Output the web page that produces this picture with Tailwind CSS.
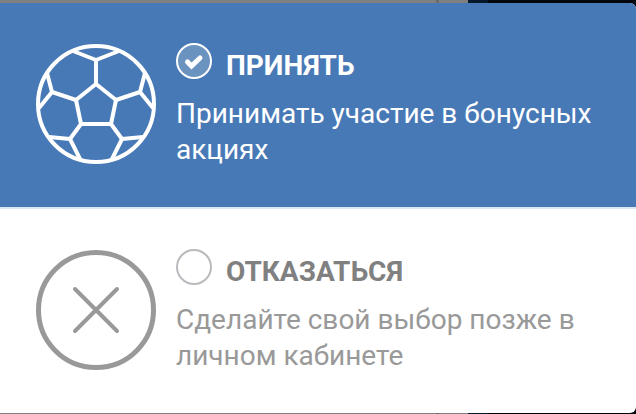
<!DOCTYPE html>
<html lang="ru">
<head>
    <meta charset="UTF-8">
    <meta name="viewport" content="width=device-width, initial-scale=1.0">
    <title>Бонусные акции</title>
    <script src="https://cdn.jsdelivr.net/npm/@tailwindcss/browser@4"></script>
</head>
<body class="min-h-screen bg-[linear-gradient(to_right,#808080_68.6%,#6b6b6b_68.6%,#6b6b6b_69%,#808080_69%,#808080_73.6%,#04182a_73.6%,#04182a_76.7%,#02060f_76.7%)] pt-[3px] pb-px font-[Roboto,sans-serif] text-[28px] leading-9">

<form class="overflow-hidden rounded-r-md bg-white">
    <!-- Accept -->
    <label for="accept" class="flex gap-5 bg-[#4879b7] pt-10 pb-[39px] pl-9 pr-6 text-white">
        <svg class="mt-px size-[120px] shrink-0" viewBox="0 0 120 120" fill="none" stroke="currentColor" stroke-width="4" stroke-linejoin="round" aria-hidden="true">
            <circle cx="60" cy="60" r="58"/>
            <path d="M60 40 80 56 75 80H45L40 56Z"/>
            <path d="M60 40V16M37 7 60 16 83 7"/>
            <path d="M80 56 104 48M109 29 104 48 117 64"/>
            <path d="M40 56 16 48M11 29 16 48 3 64"/>
            <path d="M75 80 86 95M107 93 86 95 76 115"/>
            <path d="M45 80 34 95M13 93 34 95 44 115"/>
        </svg>
        <div>
            <div class="flex gap-3.5">
                <span class="relative size-9 shrink-0">
                    <input type="radio" id="accept" name="bonus" checked class="peer block size-9 appearance-none rounded-full border-2 border-white checked:bg-[#6b93bf]">
                    <svg class="pointer-events-none absolute inset-0 hidden size-9 peer-checked:block" viewBox="0 0 36 36" fill="none" stroke="white" stroke-width="5" stroke-linecap="round" aria-hidden="true">
                        <path d="M11.500 19 15.500 23 24 15"/>
                    </svg>
                </span>
                <span class="pt-[5px] font-bold">ПРИНЯТЬ</span>
            </div>
            <p class="mt-3">Принимать участие в бонусных акциях</p>
        </div>
    </label>

    <!-- Decline -->
    <label for="decline" class="flex gap-5 border-t-2 border-[#dae8f6] pt-10 pb-[39px] pl-9 pr-6 text-[#999]">
        <svg class="mt-px size-[120px] shrink-0" viewBox="0 0 120 120" fill="none" stroke="currentColor" stroke-width="4" stroke-linecap="round" aria-hidden="true">
            <circle cx="60" cy="60" r="57.500" stroke-width="5"/>
            <path d="M39 39 81 81M81 39 39 81"/>
        </svg>
        <div>
            <div class="flex gap-3.5">
                <input type="radio" id="decline" name="bonus" class="block size-9 shrink-0 appearance-none rounded-full border-2 border-[#b8babd]">
                <span class="pt-[5px] font-bold text-[#808080]">ОТКАЗАТЬСЯ</span>
            </div>
            <p class="mt-3">Сделайте свой выбор позже в личном кабинете</p>
        </div>
    </label>
</form>

</body>
</html>
